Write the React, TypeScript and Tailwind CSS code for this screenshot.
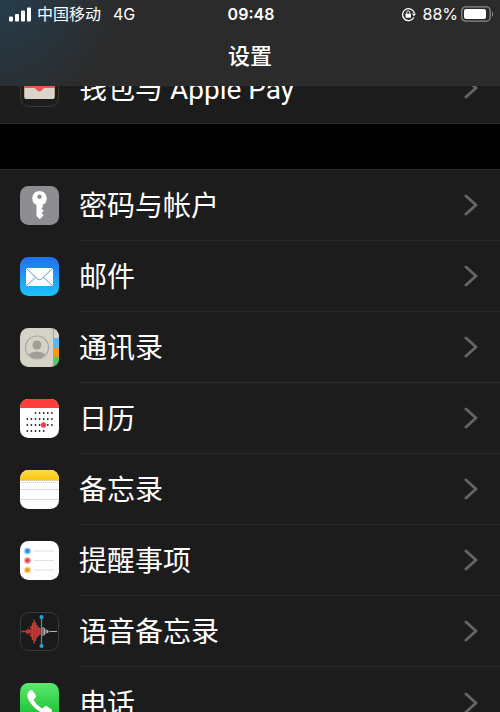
import type { ReactNode } from 'react';

interface SettingItem {
  id: string;
  label: string;
  icon: ReactNode;
}

const WalletIcon = () => (
  <svg viewBox="0 0 39 39" className="size-[39px]" aria-hidden="true">
    <rect x="0.5" y="0.5" width="38" height="38" rx="8.5" fill="#1c1c1c" stroke="#3a3a3a" />
    <rect x="4.5" y="6" width="30" height="25" rx="2" fill="#4aa3df" />
    <rect x="4.5" y="10" width="30" height="20" rx="2" fill="#f5c033" />
    <rect x="4.5" y="14" width="30" height="16" rx="2" fill="#ef5350" />
    <path d="M4.5 20h9.500c1.500 0 2 1 3 2.300s4 1.500 5 0 1.500-2.300 3-2.300h9.500v9.500a1.500 1.500 0 0 1-1.500 1.500h-27a1.500 1.500 0 0 1-1.500-1.500z" fill="#d9d5ca" />
  </svg>
);

const KeyIcon = () => (
  <svg viewBox="0 0 39 39" className="size-[39px]" aria-hidden="true">
    <rect width="39" height="39" rx="8.5" fill="#8e8e92" />
    <path
      d="M19.500 5a7.300 7.300 0 0 0-3 13.900V30l3.200 3.200 4-3.900-2.200-2.300 2.200-2.300-2.200-2.300 1.200-1.400v-2.200A7.300 7.300 0 0 0 19.500 5z"
      fill="#fff"
    />
    <circle cx="19.500" cy="10.800" r="2.200" fill="#8e8e92" />
  </svg>
);

const MailIcon = () => (
  <svg viewBox="0 0 39 39" className="size-[39px]" aria-hidden="true">
    <defs>
      <linearGradient id="mail-bg" x1="0" y1="0" x2="0" y2="1">
        <stop offset="0" stopColor="#2170ef" />
        <stop offset="1" stopColor="#1cc3f8" />
      </linearGradient>
    </defs>
    <rect width="39" height="39" rx="8.500" fill="url(#mail-bg)" />
    <rect x="6" y="11" width="27" height="18" rx="1.500" fill="#fff" />
    <path
      d="M6.500 11.500l10.800 10.300c1.300 1.200 3.100 1.200 4.400 0L32.500 11.500M6.500 28.500l9.200-8.200M32.500 28.500l-9.200-8.200"
      fill="none"
      stroke="#3b8fd0"
      strokeWidth="0.9"
    />
  </svg>
);

const ContactsIcon = () => (
  <svg viewBox="0 0 39 39" className="size-[39px]" aria-hidden="true">
    <defs>
      <clipPath id="contacts-clip">
        <rect width="39" height="39" rx="8.500" />
      </clipPath>
      <clipPath id="contacts-face">
        <circle cx="17" cy="19.500" r="11" />
      </clipPath>
    </defs>
    <g clipPath="url(#contacts-clip)">
      <rect width="39" height="39" fill="#d5d3c8" />
      <rect x="33" width="1" height="39" fill="#a5a49a" />
      <rect x="34" width="5" height="10" fill="#d8d6cc" />
      <rect x="34" y="10" width="5" height="10" fill="#5bb8f0" />
      <rect x="34" y="20" width="5" height="9" fill="#f59a16" />
      <rect x="34" y="29" width="5" height="10" fill="#55c860" />
    </g>
    <g clipPath="url(#contacts-face)" fill="#a09e96">
      <circle cx="17" cy="17" r="4.500" />
      <ellipse cx="17" cy="29" rx="9" ry="5.500" />
    </g>
    <circle cx="17" cy="19.500" r="11.500" fill="none" stroke="#a8a69e" strokeWidth="1.200" />
  </svg>
);

const calendarRows = [
  { y: 14, from: 2, to: 6 },
  { y: 20, from: 0, to: 6 },
  { y: 26, from: 0, to: 6 },
  { y: 32, from: 0, to: 4 },
];

const CalendarIcon = () => (
  <svg viewBox="0 0 39 39" className="size-[39px]" aria-hidden="true">
    <defs>
      <clipPath id="calendar-clip">
        <rect width="39" height="39" rx="8.500" />
      </clipPath>
    </defs>
    <g clipPath="url(#calendar-clip)">
      <rect width="39" height="39" fill="#fff" />
      <rect width="39" height="9" fill="#fc3d39" />
    </g>
    {calendarRows.map((row) =>
      Array.from({ length: row.to - row.from + 1 }).map((_, i) => (
        <circle key={`${row.y}-${i}`} cx={7.3 + (row.from + i) * 4.1} cy={row.y} r="0.900" fill="#222" />
      ))
    )}
    <circle cx="23.500" cy="26" r="2.700" fill="#fb3b4e" />
  </svg>
);

const NotesIcon = () => (
  <svg viewBox="0 0 39 39" className="size-[39px]" aria-hidden="true">
    <defs>
      <linearGradient id="notes-top" x1="0" y1="0" x2="0" y2="1">
        <stop offset="0" stopColor="#fddb4a" />
        <stop offset="1" stopColor="#fbc810" />
      </linearGradient>
      <clipPath id="notes-clip">
        <rect width="39" height="39" rx="8.500" />
      </clipPath>
    </defs>
    <g clipPath="url(#notes-clip)">
      <rect width="39" height="39" fill="#fff" />
      <rect width="39" height="10" fill="url(#notes-top)" />
      <path d="M0 10.500h39" stroke="#d8c48a" strokeWidth="0.800" />
      <path d="M1 12.500h38" stroke="#c8c8c8" strokeDasharray="1 1" />
      <path d="M0 19.500h39M0 29.500h39" stroke="#d4d4d4" strokeWidth="0.900" />
    </g>
  </svg>
);

const reminderDots = [
  { y: 10, color: '#2f8fdb', ring: '#a9d3f3' },
  { y: 19.5, color: '#e5484d', ring: '#f5b5b5' },
  { y: 29, color: '#f0a020', ring: '#f8dba0' },
];

const RemindersIcon = () => (
  <svg viewBox="0 0 39 39" className="size-[39px]" aria-hidden="true">
    <rect width="39" height="39" rx="8.500" fill="#fff" />
    {reminderDots.map((dot) => (
      <g key={dot.y}>
        <circle cx="7.500" cy={dot.y} r="3.600" fill={dot.ring} />
        <circle cx="7.500" cy={dot.y} r="2.300" fill={dot.color} />
        <path d={`M14 ${dot.y}h20`} stroke="#dcdcdc" strokeWidth="0.900" />
      </g>
    ))}
  </svg>
);

const VoiceMemosIcon = () => (
  <svg viewBox="0 0 39 39" className="size-[39px]" aria-hidden="true">
    <rect x="0.500" y="0.500" width="38" height="38" rx="8.500" fill="#1a1a1a" stroke="#3a3a3a" />
    <path
      d="M1.500 19.500h4M6.500 18v3M8 16.500v6M9.500 18v3M11 14v11M12.500 11v17M14 7.500v24M15.500 10v19M17 13v13M18.500 15v9M20 16v7"
      stroke="#cf3d38"
      strokeWidth="1.300"
    />
    <path d="M23 15v9M24.500 16v7M26 17.500v4M27.500 18v3M29 18.800v1.400M30 19.500h7" stroke="#b9b4b4" strokeWidth="1.100" />
    <path d="M21.500 5v29" stroke="#2b9fd9" strokeWidth="1.200" />
    <circle cx="21.500" cy="5" r="2" fill="#2b9fd9" />
    <circle cx="21.500" cy="34" r="2" fill="#2b9fd9" />
  </svg>
);

const PhoneIcon = () => (
  <svg viewBox="0 0 39 39" className="size-[39px]" aria-hidden="true">
    <defs>
      <linearGradient id="phone-bg" x1="0" y1="0" x2="0" y2="1">
        <stop offset="0" stopColor="#5bea6c" />
        <stop offset="1" stopColor="#10b92c" />
      </linearGradient>
    </defs>
    <rect width="39" height="39" rx="8.500" fill="url(#phone-bg)" />
    <path
      d="M9.200 8.200c1.400-1.500 2.600-1.500 3.600-.2l2.700 3.800c.8 1.200.6 2.200-.4 3.200l-1 1c-.5.600-.5 1 0 1.800 1.800 2.800 4.200 5.200 7.200 7.100.7.500 1.200.4 1.800-.1l1-1c1-1 2-1.200 3.200-.4l3.800 2.700c1.300 1 1.300 2.200-.2 3.600-2.200 2.200-5 2.400-8.500.6C16 27 11.500 22.500 8.400 16.600c-1.700-3.300-1.400-6.200.8-8.400z"
      fill="#fff"
    />
  </svg>
);

const walletItems: SettingItem[] = [{ id: 'wallet', label: '钱包与 Apple Pay', icon: <WalletIcon /> }];

const appItems: SettingItem[] = [
  { id: 'passwords', label: '密码与帐户', icon: <KeyIcon /> },
  { id: 'mail', label: '邮件', icon: <MailIcon /> },
  { id: 'contacts', label: '通讯录', icon: <ContactsIcon /> },
  { id: 'calendar', label: '日历', icon: <CalendarIcon /> },
  { id: 'notes', label: '备忘录', icon: <NotesIcon /> },
  { id: 'reminders', label: '提醒事项', icon: <RemindersIcon /> },
  { id: 'voice-memos', label: '语音备忘录', icon: <VoiceMemosIcon /> },
  { id: 'phone', label: '电话', icon: <PhoneIcon /> },
];

function StatusBar() {
  return (
    <div className="grid h-7 grid-cols-3 items-center pr-1.5 pl-2 text-base leading-7">
      <div className="flex items-center">
        <svg viewBox="0 0 24 15" className="h-[15px] w-6" fill="#fff" aria-hidden="true">
          <rect x="1" y="9.500" width="4" height="5" rx="1" />
          <rect x="7" y="7" width="4" height="7.500" rx="1" />
          <rect x="13" y="3.500" width="4" height="11" rx="1" />
          <rect x="19" y="0.500" width="4" height="14" rx="1" />
        </svg>
        <span className="ml-[5px]">中国移动</span>
        <span className="ml-3">4G</span>
      </div>
      <div className="text-center font-semibold">09:48</div>
      <div className="flex items-center justify-end">
        <svg viewBox="0 0 15 15" className="mr-1.5 size-[15px]" aria-hidden="true">
          <path d="M12.800 10.500A6 6 0 1 1 13.300 6" fill="none" stroke="#fff" strokeWidth="1.300" />
          <path d="M11 6.500h4l-2 3z" fill="#fff" />
          <rect x="4.500" y="6.700" width="5.500" height="4" rx="0.600" fill="#fff" />
          <path d="M5.700 7V5.500a1.500 1.500 0 0 1 3.100 0V7" fill="none" stroke="#fff" strokeWidth="1" />
        </svg>
        <span>88%</span>
        <svg viewBox="0 0 33 16" className="ml-[3px] h-4 w-[33px]" aria-hidden="true">
          <rect x="0.800" y="0.800" width="28.400" height="14.400" rx="4" fill="none" stroke="#8b8b8b" strokeWidth="1.300" />
          <rect x="3" y="3" width="22" height="10" rx="2" fill="#fff" />
          <path d="M31 5.500c1.500.6 1.500 4.400 0 5z" fill="#8b8b8b" />
        </svg>
      </div>
    </div>
  );
}

function SettingGroup({ items }: { items: SettingItem[] }) {
  return (
    <ul className="border-y border-[#292929] bg-[#1c1c1c]">
      {items.map((item, index) => (
        <li key={item.id}>
          <a href={`#${item.id}`} className="flex items-stretch gap-5 pl-5">
            <span className="flex items-center">{item.icon}</span>
            <span
              className={`flex h-[71px] flex-1 items-center justify-between pr-[22px] ${
                index < items.length - 1 ? 'border-b border-[#2a2a2a]' : ''
              }`}
            >
              <span className="pt-1 font-['Roboto','Noto_Sans_CJK_SC',sans-serif] text-[28px] leading-10">{item.label}</span>
              <svg viewBox="0 0 14 22" className="h-[22px] w-3.5" aria-hidden="true">
                <path d="M2 2l10 9-10 9" fill="none" stroke="#646466" strokeWidth="3" strokeLinecap="round" strokeLinejoin="round" />
              </svg>
            </span>
          </a>
        </li>
      ))}
    </ul>
  );
}

export default function App() {
  return (
    <div className="flex h-screen flex-col overflow-hidden bg-black font-['Inter','Noto_Sans_CJK_SC',sans-serif] text-white">
      <header className="z-10 h-[86px] shrink-0 border-b border-[#303030] bg-[#2b2b2b] bg-[radial-gradient(circle_at_top_left,#263d4c,#2b2b2b_120px)]">
        <StatusBar />
        <h1 className="text-center text-[22px] leading-[56px] font-medium">设置</h1>
      </header>

      {/* list is scrolled a little under the header */}
      <main className="-mt-[35px] flex flex-col gap-[45px]">
        <SettingGroup items={walletItems} />
        <SettingGroup items={appItems} />
      </main>
    </div>
  );
}
